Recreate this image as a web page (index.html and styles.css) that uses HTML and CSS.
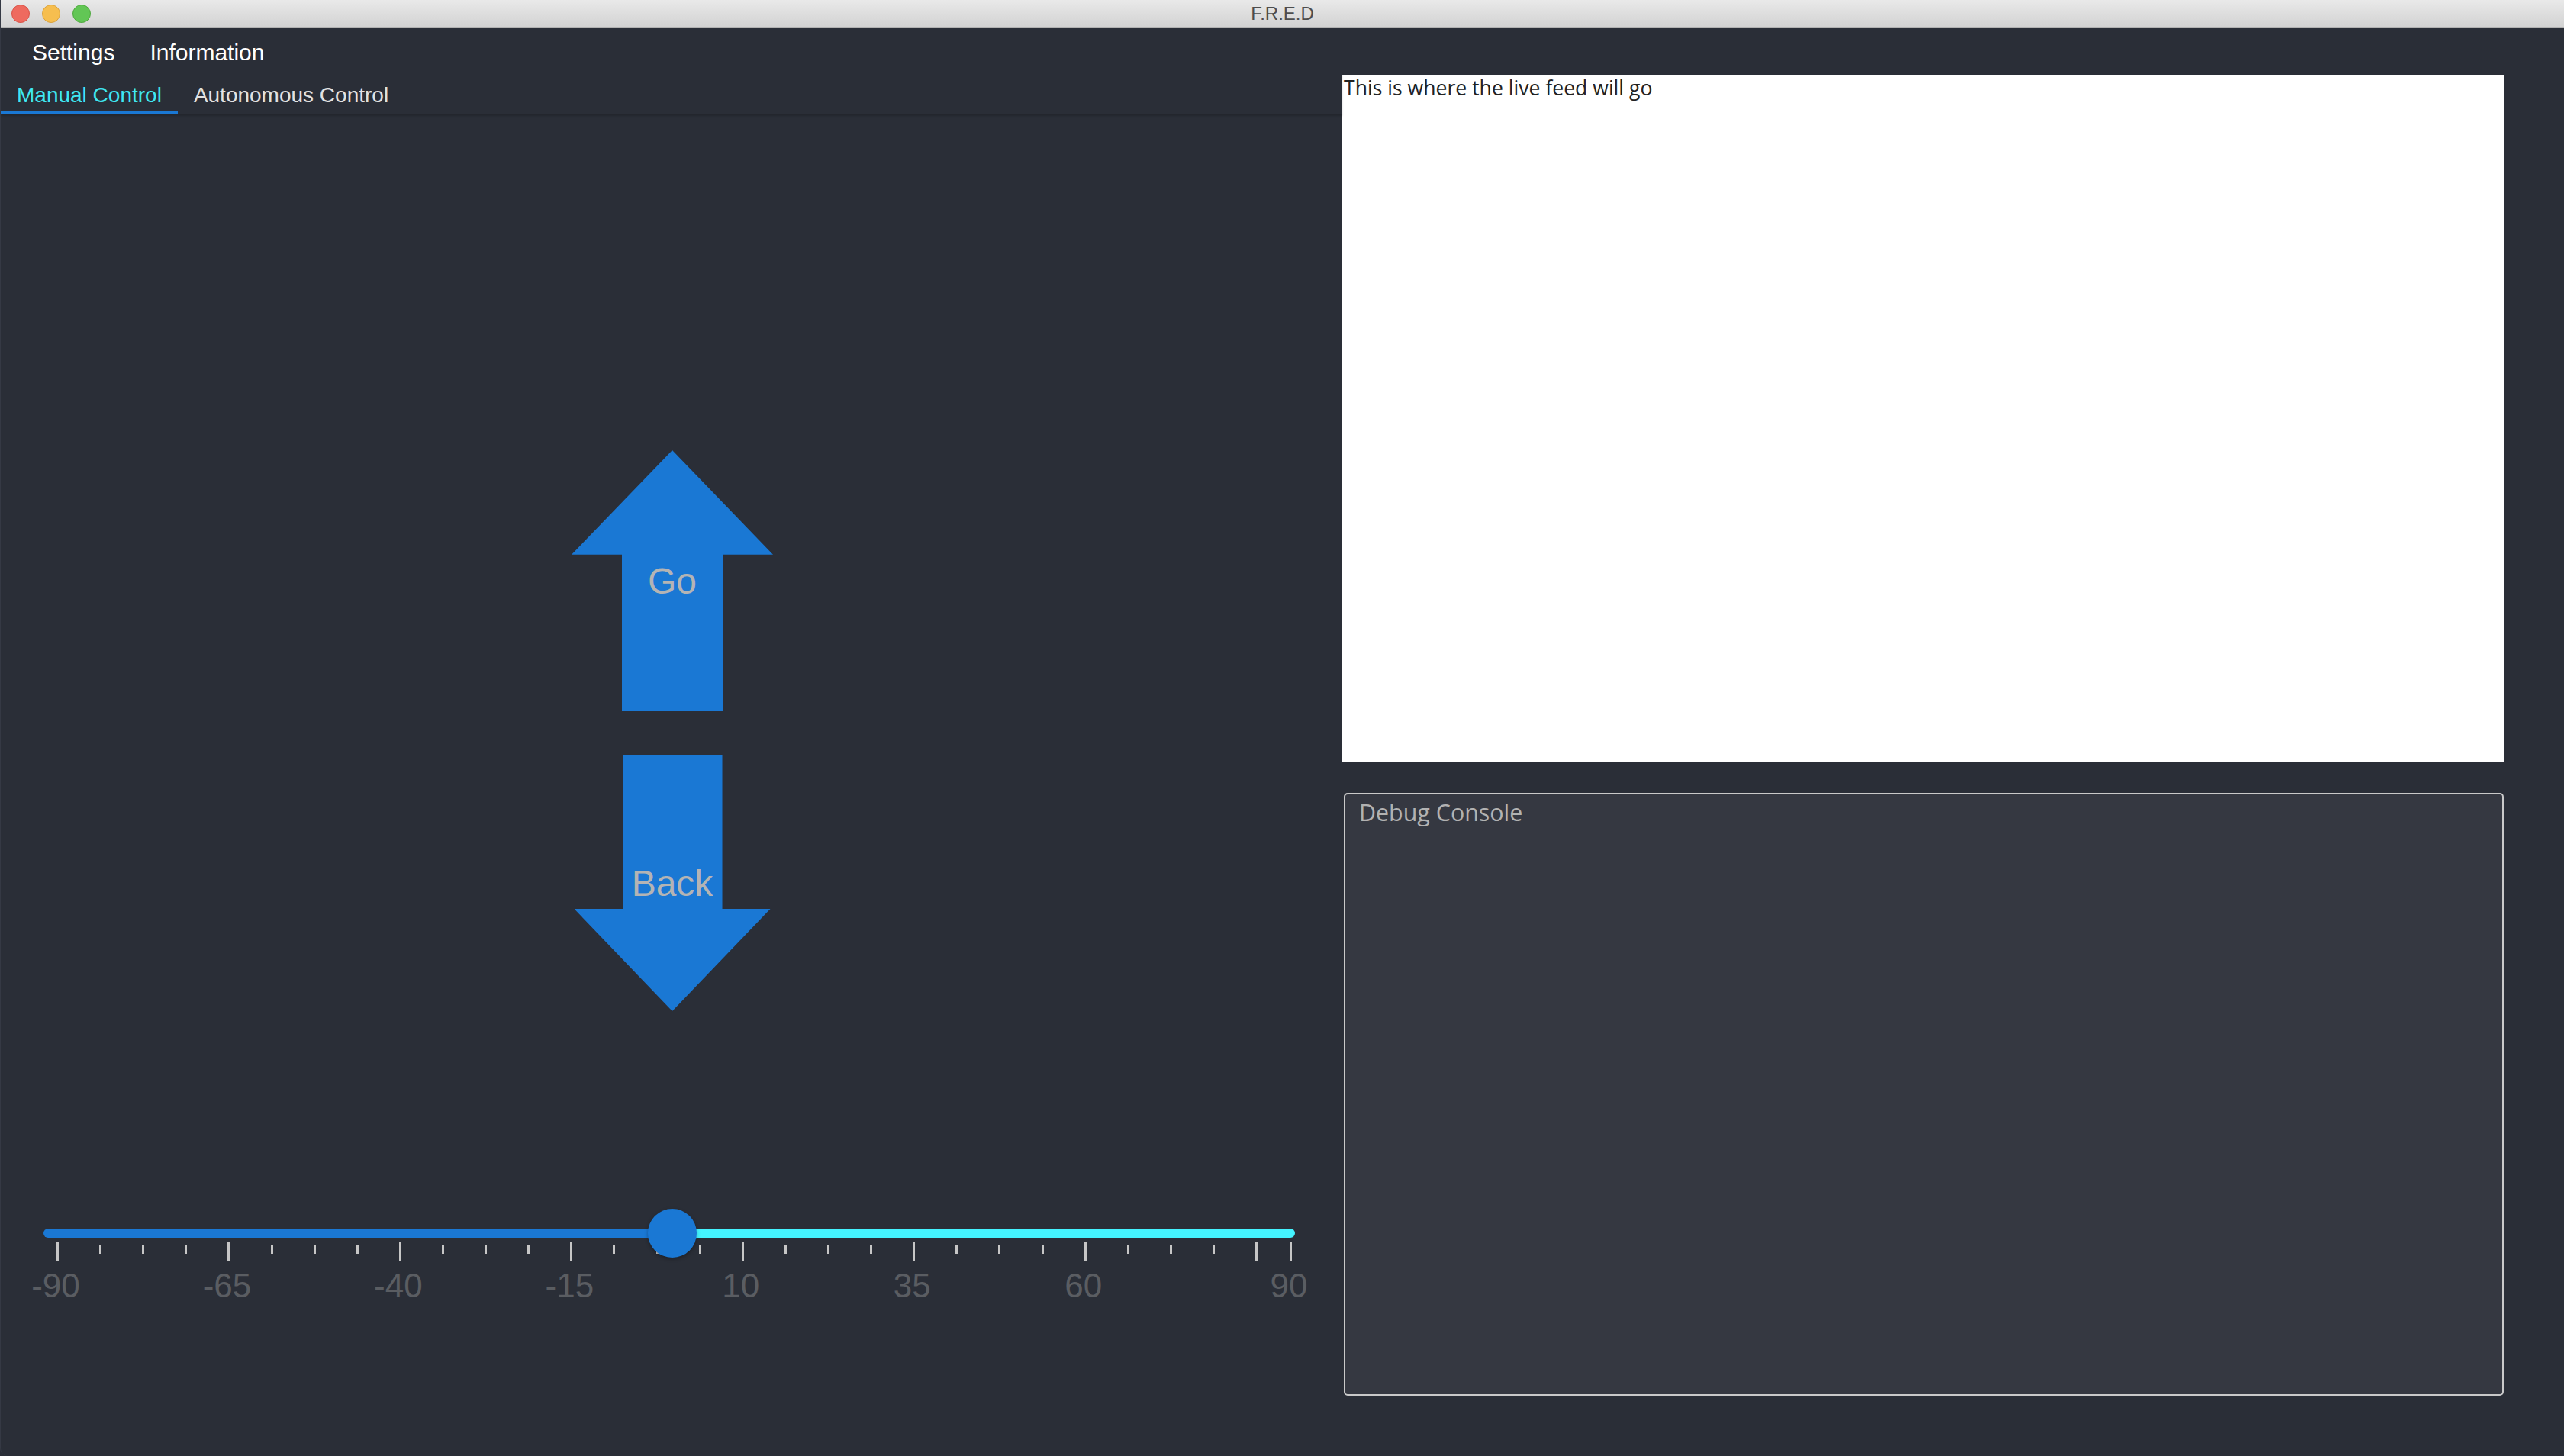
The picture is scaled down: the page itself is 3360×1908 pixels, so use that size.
FILE: index.html
```html
<!DOCTYPE html>
<html lang="en">
<head>
<meta charset="utf-8">
<title>F.R.E.D</title>
<link rel="stylesheet" href="styles.css">
</head>
<body>
<div class="window">
  <header class="titlebar">
    <div class="lights">
      <span class="light red"></span>
      <span class="light yellow"></span>
      <span class="light green"></span>
    </div>
    <div class="title">F.R.E.D</div>
    <div class="spacer"></div>
  </header>
  <nav class="menubar">
    <span class="menu-item">Settings</span>
    <span class="menu-item">Information</span>
  </nav>
  <div class="main">
    <section class="left">
      <div class="tabs">
        <div class="tab active">Manual Control</div>
        <div class="tab">Autonomous Control</div>
      </div>
      <div class="tab-content">
        <div class="drive">
          <button class="arrow go">Go</button>
          <button class="arrow back">Back</button>
        </div>
        <div class="slider">
          <div class="track-row">
            <div class="track">
              <div class="fill-low" style="width: 50.24%"></div>
              <div class="fill-high"></div>
            </div>
            <div class="thumb" style="left: 50.24%"></div>
          </div>
          <div class="axis">
            <span class="tick major" style="left: 0%"></span>
            <span class="tick minor" style="left: 3.472%"></span>
            <span class="tick minor" style="left: 6.944%"></span>
            <span class="tick minor" style="left: 10.417%"></span>
            <span class="tick major" style="left: 13.889%"></span>
            <span class="tick minor" style="left: 17.361%"></span>
            <span class="tick minor" style="left: 20.833%"></span>
            <span class="tick minor" style="left: 24.306%"></span>
            <span class="tick major" style="left: 27.778%"></span>
            <span class="tick minor" style="left: 31.25%"></span>
            <span class="tick minor" style="left: 34.722%"></span>
            <span class="tick minor" style="left: 38.194%"></span>
            <span class="tick major" style="left: 41.667%"></span>
            <span class="tick minor" style="left: 45.139%"></span>
            <span class="tick minor" style="left: 48.611%"></span>
            <span class="tick minor" style="left: 52.083%"></span>
            <span class="tick major" style="left: 55.556%"></span>
            <span class="tick minor" style="left: 59.028%"></span>
            <span class="tick minor" style="left: 62.5%"></span>
            <span class="tick minor" style="left: 65.972%"></span>
            <span class="tick major" style="left: 69.444%"></span>
            <span class="tick minor" style="left: 72.917%"></span>
            <span class="tick minor" style="left: 76.389%"></span>
            <span class="tick minor" style="left: 79.861%"></span>
            <span class="tick major" style="left: 83.333%"></span>
            <span class="tick minor" style="left: 86.806%"></span>
            <span class="tick minor" style="left: 90.278%"></span>
            <span class="tick minor" style="left: 93.75%"></span>
            <span class="tick major" style="left: 97.222%"></span>
            <span class="tick major" style="left: 100%"></span>
          </div>
          <div class="labels">
            <span class="label" style="left: 0%">-90</span>
            <span class="label" style="left: 13.889%">-65</span>
            <span class="label" style="left: 27.778%">-40</span>
            <span class="label" style="left: 41.667%">-15</span>
            <span class="label" style="left: 55.556%">10</span>
            <span class="label" style="left: 69.444%">35</span>
            <span class="label" style="left: 83.333%">60</span>
            <span class="label" style="left: 100%">90</span>
          </div>
        </div>
      </div>
    </section>
    <section class="right">
      <div class="feed">This is where the live feed will go</div>
      <div class="console">Debug Console</div>
    </section>
  </div>
</div>
</body>
</html>
```

FILE: styles.css
```css
* {
  box-sizing: border-box;
}

html, body {
  margin: 0;
  padding: 0;
  background: #2a2e37;
}

.window {
  width: 3360px;
  height: 1908px;
  background: #2a2e37;
  display: flex;
  flex-direction: column;
  overflow: hidden;
  font-family: "Liberation Sans", Arial, sans-serif;
  border-left: 1px solid #353944;
  border-radius: 0 0 10px 10px;
}

/* ---------- title bar ---------- */
.titlebar {
  height: 37px;
  flex: none;
  display: grid;
  grid-template-columns: 1fr auto 1fr;
  align-items: center;
  background: linear-gradient(#e9e9e9, #d2d2d2);
  border-bottom: 1px solid #b2b2b2;
}

.lights {
  display: flex;
  gap: 16px;
  padding-left: 14px;
}

.light {
  width: 24px;
  height: 24px;
  border-radius: 50%;
  display: block;
}

.light.red { background: #ee6a5f; border: 1px solid #d85247; }
.light.yellow { background: #f6be4f; border: 1px solid #d9a23e; }
.light.green { background: #62c655; border: 1px solid #4ea83d; }

.title {
  font-size: 24px;
  color: #4d4d4d;
  line-height: 28px;
}

/* ---------- menu bar ---------- */
.menubar {
  height: 58px;
  flex: none;
  display: flex;
  padding: 15px 0 0 18px;
}

.menu-item {
  font-size: 30px;
  line-height: 34px;
  color: #ffffff;
  padding: 0 23px;
}

/* ---------- main ---------- */
.main {
  flex: 1;
  display: grid;
  grid-template-columns: 1758px 1522px;
}

.left {
  display: flex;
  flex-direction: column;
}

.tabs {
  height: 55px;
  display: flex;
  box-shadow: 0 2px 2px rgba(0, 0, 0, 0.18);
  position: relative;
  z-index: 1;
}

.tab {
  font-size: 28px;
  line-height: 32px;
  padding: 14px 21px 5px;
  color: #e2e2e2;
  border-bottom: 4px solid transparent;
}

.tab.active {
  color: #3fe7f3;
  border-bottom-color: #1a78d4;
}

.tab-content {
  flex: 1;
  display: flex;
  flex-direction: column;
  padding-top: 440px;
}

.drive {
  display: flex;
  flex-direction: column;
  align-items: center;
  padding-left: 2px;
}

.arrow {
  border: none;
  padding: 0;
  margin: 0;
  background: #1a78d4;
  color: #b4b4b4;
  font-family: "Liberation Sans", Arial, sans-serif;
  font-size: 48px;
  display: flex;
  align-items: center;
  justify-content: center;
}

.arrow.go {
  width: 264px;
  height: 342px;
  clip-path: polygon(50% 0, 100% 40%, 75% 40%, 75% 100%, 25% 100%, 25% 40%, 0 40%);
}

.arrow.back {
  width: 257px;
  height: 335px;
  margin-top: 58px;
  clip-path: polygon(25% 0, 75.5% 0, 75.5% 60%, 100% 60%, 50% 100%, 0 60%, 25% 60%);
}

/* ---------- slider ---------- */
.slider {
  margin-top: 259px;
  margin-left: 56px;
  width: 1640px;
}

.track-row {
  position: relative;
  height: 64px;
  display: flex;
  align-items: center;
}

.track {
  width: 100%;
  height: 12px;
  display: flex;
}

.fill-low {
  background: #1a78d4;
  border-radius: 6px 0 0 6px;
}

.fill-high {
  flex: 1;
  background: #44f4ff;
  border-radius: 0 6px 6px 0;
}

.thumb {
  position: absolute;
  top: 0;
  width: 64px;
  height: 64px;
  margin-left: -32px;
  border-radius: 50%;
  background: #1a78d4;
  box-shadow: 0 2px 5px rgba(0, 0, 0, 0.3);
  z-index: 2;
}

.axis {
  position: relative;
  margin-top: -20px;
  margin-left: 18px;
  width: 1616px;
  height: 24px;
}

.tick {
  position: absolute;
  width: 3px;
  margin-left: -1px;
  background: #c6c6c6;
}

.tick.major {
  top: 0;
  height: 24px;
}

.tick.minor {
  top: 4px;
  height: 11px;
}

.labels {
  position: relative;
  margin-top: 8px;
  margin-left: 16px;
  width: 1616px;
  height: 50px;
}

.label {
  position: absolute;
  top: 0;
  transform: translateX(-50%);
  font-size: 44px;
  color: #5a5d62;
  white-space: nowrap;
}

/* ---------- right column ---------- */
.right {
  display: flex;
  flex-direction: column;
  padding-top: 3px;
}

.feed {
  height: 900px;
  background: #ffffff;
  color: #222222;
  font-family: "Open Sans", "Liberation Sans", sans-serif;
  font-size: 26.6px;
  line-height: 34px;
  padding-left: 2px;
}

.console {
  margin-top: 41px;
  margin-left: 2px;
  height: 790px;
  border: 2px solid #c9c9c9;
  border-radius: 5px;
  background: #353841;
  color: #b2b2b2;
  font-family: "Open Sans", "Liberation Sans", sans-serif;
  font-size: 30.4px;
  line-height: 40px;
  padding: 4px 18px;
}
```
